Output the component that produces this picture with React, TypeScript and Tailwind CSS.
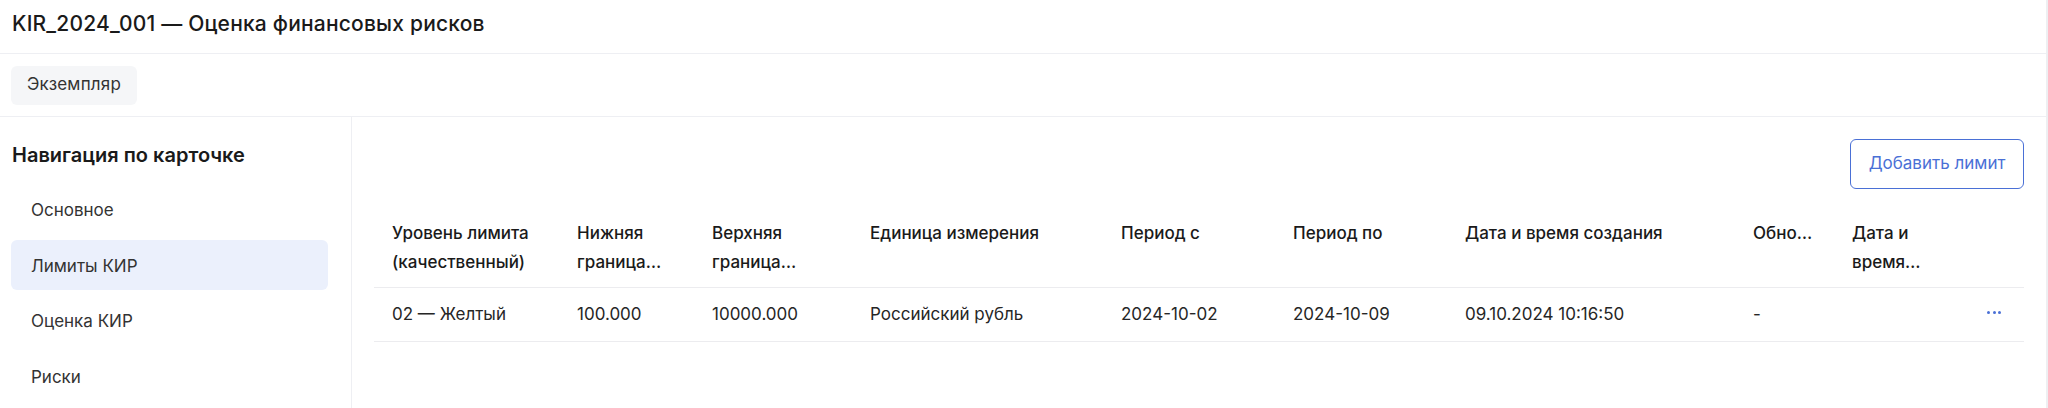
const navItems = ["Основное", "Лимиты КИР", "Оценка КИР", "Риски"];

const columns: string[][] = [
  ["Уровень лимита", "(качественный)"],
  ["Нижняя", "граница…"],
  ["Верхняя", "граница…"],
  ["Единица измерения"],
  ["Период с"],
  ["Период по"],
  ["Дата и время создания"],
  ["Обно…"],
  ["Дата и", "время…"],
];

const rows = [
  [
    "02 — Желтый",
    "100.000",
    "10000.000",
    "Российский рубль",
    "2024-10-02",
    "2024-10-09",
    "09.10.2024 10:16:50",
    "-",
    "",
  ],
];

const gridCols =
  "grid grid-cols-[185px_135px_158px_251px_172px_172px_288px_99px_99px_1fr]";

export default function App() {
  return (
    <div className="w-[2048px] h-[408px] overflow-hidden bg-white border-r-2 border-[#eeeff2] flex flex-col font-['Inter',sans-serif] text-[#262626]">
      <header className="h-[54px] shrink-0 border-b border-[#eeeff3] px-3 pb-[5px] flex items-center">
        <h1 className="text-[21px] font-medium text-[#1a1a1a] tracking-[0.2px]">
          KIR_2024_001 — Оценка финансовых рисков
        </h1>
      </header>

      <div className="h-[63px] shrink-0 border-b border-[#eeeff3] px-[11px] flex items-center">
        <button className="h-[39px] px-[16px] rounded-md bg-[#f5f6f8] text-[17px] tracking-[0.2px] text-[#333]">
          Экземпляр
        </button>
      </div>

      <div className="flex flex-1 min-h-0">
        <aside className="w-[352px] shrink-0 border-r border-[#eeeff3] pl-[11px] pt-6">
          <h2 className="pl-[1px] text-[20px] leading-[28px] font-semibold text-[#1a1a1a]">
            Навигация по карточке
          </h2>
          <nav className="mt-[15px] flex flex-col gap-[5.5px]">
            {navItems.map((item) => (
              <div
                key={item}
                className={
                  "w-[317px] h-[50px] rounded-md pl-5 pt-1 flex items-center text-[17px] text-[#333] " +
                  (item === "Лимиты КИР" ? "bg-[#ebf0fc]" : "")
                }
              >
                {item}
              </div>
            ))}
          </nav>
        </aside>

        <main className="flex-1 px-[22px] pt-[22px]">
          <div className="flex justify-end">
            <button className="w-[174px] h-[50px] rounded-md border border-[#4a70d6] text-[#4a70d6] text-[17px]">
              Добавить лимит
            </button>
          </div>

          <div className="mt-[19px] text-[17px]">
            <div className={gridCols + " border-b border-[#ececef]"}>
              {columns.map((lines, i) => (
                <div key={i} className="px-[18px] pt-[11px] pb-[10px] font-medium text-[#1a1a1a] leading-[29px]">
                  {lines.map((l) => (
                    <div key={l} className="whitespace-nowrap">
                      {l}
                    </div>
                  ))}
                </div>
              ))}
              <div />
            </div>

            {rows.map((row, r) => (
              <div key={r} className={gridCols + " border-b border-[#ececef]"}>
                {row.map((cell, i) => (
                  <div key={i} className="px-[18px] h-[53px] flex items-center whitespace-nowrap">
                    {cell}
                  </div>
                ))}
                <div className="h-[53px] flex items-center justify-end gap-[2.5px] pr-[23px] pb-[4px]">
                  <span className="w-[3px] h-[3px] rounded-full bg-[#4a70d6]" />
                  <span className="w-[3px] h-[3px] rounded-full bg-[#4a70d6]" />
                  <span className="w-[3px] h-[3px] rounded-full bg-[#4a70d6]" />
                </div>
              </div>
            ))}
          </div>
        </main>
      </div>
    </div>
  );
}
